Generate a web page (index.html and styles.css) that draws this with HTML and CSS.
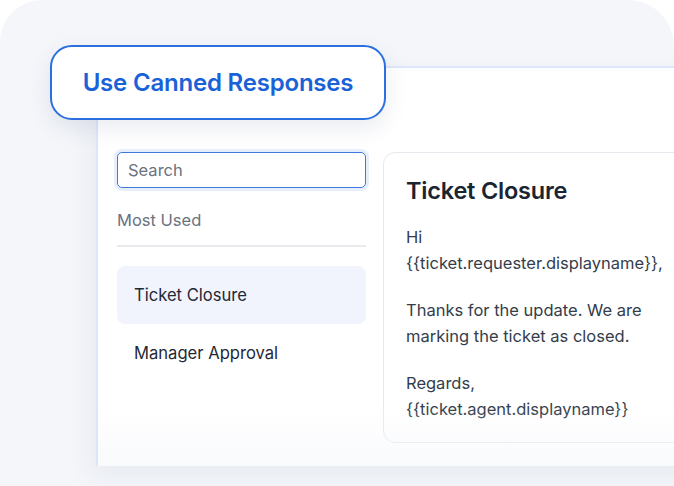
FILE: index.html
```html
<!DOCTYPE html>
<html lang="en">
<head>
<meta charset="utf-8">
<title>Use Canned Responses</title>
<link rel="stylesheet" href="styles.css">
</head>
<body>
<div class="stage">
  <div class="panel">
    <div class="panel-body">
      <aside class="sidebar">
        <div class="search">Search</div>
        <div class="group-label">Most Used</div>
        <div class="divider"></div>
        <ul class="list">
          <li class="item active">Ticket Closure</li>
          <li class="item">Manager Approval</li>
        </ul>
      </aside>
      <section class="preview">
        <h3 class="preview-title">Ticket Closure</h3>
        <p>Hi<br>{{ticket.requester.displayname}},</p>
        <p>Thanks for the update. We are marking the ticket as closed.</p>
        <p>Regards,<br>{{ticket.agent.displayname}}</p>
      </section>
    </div>
  </div>
  <div class="badge">Use Canned Responses</div>
</div>
</body>
</html>
```
FILE: styles.css
```css
* { box-sizing: border-box; }
html, body {
  margin: 0;
  padding: 0;
  background: #ffffff;
  font-family: Inter, "Noto Sans", sans-serif;
}
.stage {
  position: relative;
  width: 674px;
  height: 486px;
  background: #f4f6fa;
  border-radius: 42px 46px 0 0;
  padding: 66px 0 0 96px;
  overflow: hidden;
}
.panel {
  width: 640px;
  height: 400px;
  background: #ffffff;
  border-top: 2px solid #dfe6fb;
  border-left: 2px solid #dce6fb;
  box-shadow: -6px 10px 24px rgba(30, 50, 90, 0.06);
  padding: 84px 0 0 19px;
  position: relative;
}
.panel::after {
  content: "";
  position: absolute;
  left: 0;
  right: 0;
  bottom: 0;
  height: 60px;
  background: linear-gradient(to bottom, rgba(255,255,255,0), rgba(244,246,250,0.55));
  pointer-events: none;
}
.panel-body {
  display: flex;
  gap: 17px;
  align-items: flex-start;
}
.sidebar {
  width: 249px;
  flex: none;
}
.search {
  height: 36px;
  border: 1px solid #3f79d9;
  border-radius: 5px;
  box-shadow: 0 0 0 3px #e7eefc;
  padding-left: 10px;
  font-size: 16.5px;
  line-height: 34px;
  color: #6b7280;
}
.group-label {
  margin-top: 20px;
  font-size: 16.5px;
  line-height: 24px;
  color: #6b7280;
}
.divider {
  margin-top: 13px;
  height: 2px;
  background: #e8eaee;
}
.list {
  list-style: none;
  margin: 19px 0 0;
  padding: 0;
}
.item {
  height: 58px;
  padding-left: 17px;
  font-size: 16.6px;
  line-height: 58px;
  color: #1f2937;
  border-radius: 8px;
}
.item.active {
  background: #f1f4fd;
}
.preview {
  width: 320px;
  flex: none;
  border: 1px solid #e7e9ee;
  border-radius: 12px;
  padding: 23px 27px 20px 22px;
}
.preview-title {
  margin: 0;
  font-size: 23.5px;
  font-weight: 600;
  line-height: 30px;
  color: #1b2431;
  letter-spacing: -0.2px;
}
.preview p {
  margin: 21px 0 0;
  width: 268px;
  font-size: 16.5px;
  line-height: 26px;
  color: #333d4b;
}
.preview-title + p {
  margin-top: 18px;
}
.badge {
  position: absolute;
  left: 50px;
  top: 45px;
  width: 336px;
  height: 75px;
  border: 2px solid #2b6fe0;
  border-radius: 22px;
  background: #ffffff;
  box-shadow: 0 8px 22px rgba(40, 60, 110, 0.10);
  display: flex;
  align-items: center;
  justify-content: center;
  font-size: 24px;
  font-weight: 600;
  color: #1a62d8;
  letter-spacing: -0.2px;
}
```
